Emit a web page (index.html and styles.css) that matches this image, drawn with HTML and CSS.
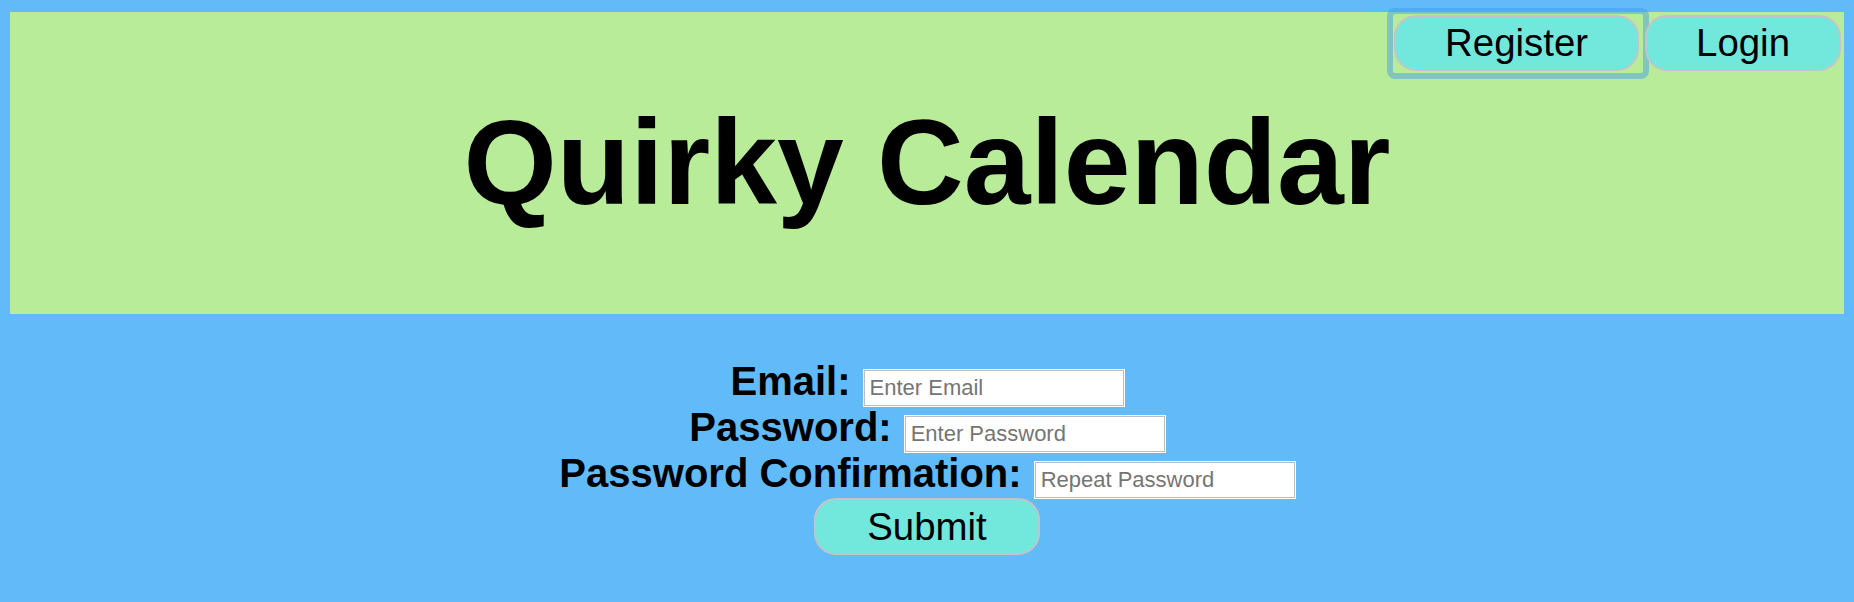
FILE: index.html
```html
<!DOCTYPE html>
<html lang="en">
<head>
<meta charset="utf-8">
<title>Quirky Calendar</title>
<link rel="stylesheet" href="styles.css">
</head>
<body>
<header class="header">
  <nav class="nav">
    <button class="btn btn-nav btn-focused" type="button">Register</button>
    <button class="btn btn-nav" type="button">Login</button>
  </nav>
  <h1 class="title">Quirky Calendar</h1>
</header>
<form class="form">
  <div class="row">
    <label class="field-label" for="email">Email:</label>
    <input class="field-input" id="email" type="text" placeholder="Enter Email">
  </div>
  <div class="row">
    <label class="field-label" for="password">Password:</label>
    <input class="field-input" id="password" type="password" placeholder="Enter Password">
  </div>
  <div class="row">
    <label class="field-label" for="confirm">Password Confirmation:</label>
    <input class="field-input" id="confirm" type="password" placeholder="Repeat Password">
  </div>
  <div class="submit-row">
    <button class="btn btn-submit" type="submit">Submit</button>
  </div>
</form>
</body>
</html>
```

FILE: styles.css
```css
html, body {
  margin: 0;
  background: #62bbf9;
}

body {
  padding: 12px 10px 0;
  font-family: "Liberation Sans", Arial, Helvetica, sans-serif;
  color: #000;
}

.header {
  box-sizing: border-box;
  height: 302px;
  padding: 3px 3px 0;
  background: #b8ec98;
}

.nav {
  display: flex;
  justify-content: flex-end;
  gap: 6px;
}

.btn {
  position: relative;
  margin: 0;
  padding: 4px 50px;
  font-family: "Liberation Sans", Arial, Helvetica, sans-serif;
  font-size: 38.4px;
  line-height: 44px;
  color: #000;
  background: #72e7dc;
  border: 2px solid #c6c3c8;
  border-radius: 22px;
}

.btn-nav {
  padding: 4px 49px;
}

.btn-focused::after {
  content: "";
  position: absolute;
  top: -9px;
  left: -9px;
  right: -12px;
  bottom: -10px;
  border: 6px solid rgba(60, 150, 240, 0.45);
  border-radius: 8px;
  pointer-events: none;
}

.title {
  margin: 24px 0 0;
  font-size: 120px;
  line-height: 134px;
  font-weight: bold;
  text-align: center;
}

.form {
  padding-top: 44px;
}

.row {
  display: flex;
  justify-content: center;
  align-items: baseline;
  gap: 13px;
  height: 46px;
}

.field-label {
  font-size: 40px;
  line-height: 46px;
  font-weight: bold;
}

.field-input {
  box-sizing: border-box;
  width: 260px;
  height: 36px;
  margin: 0;
  padding: 0 5px;
  font-family: "Liberation Sans", Arial, Helvetica, sans-serif;
  font-size: 22px;
  color: #000;
  background: #fff;
  border: 1px solid #bdbdbd;
  box-shadow: 0 0 0 1px #fff;
  outline: none;
}

.field-input::placeholder {
  color: #757575;
}

.submit-row {
  display: flex;
  justify-content: center;
  padding-top: 2px;
}

.btn-submit {
  padding: 4px 51px;
  line-height: 45px;
}
```
